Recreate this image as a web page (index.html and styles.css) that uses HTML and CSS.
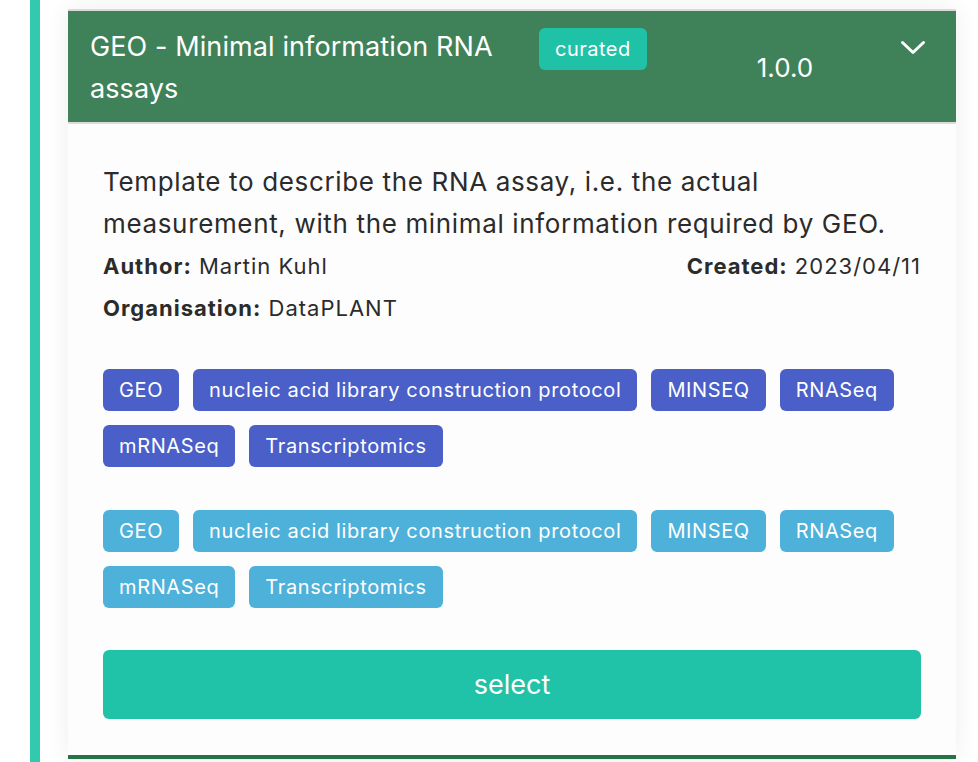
FILE: index.html
```html
<!DOCTYPE html>
<html lang="en">
<head>
<meta charset="utf-8">
<title>Template</title>
<link rel="stylesheet" href="styles.css">
</head>
<body>
<div class="rail">
  <div class="card">
    <div class="card-header">
      <div class="title">GEO - Minimal information RNA assays</div>
      <span class="badge">curated</span>
      <span class="version">1.0.0</span>
      <span class="chevron">
        <svg width="26" height="16" viewBox="0 0 26 16"><polyline points="2.5,2.5 13,12.5 23.5,2.5" fill="none" stroke="#fff" stroke-width="3" stroke-linecap="round" stroke-linejoin="round"/></svg>
      </span>
    </div>
    <div class="card-body">
      <p class="desc">Template to describe the RNA assay, i.e. the actual measurement, with the minimal information required by GEO.</p>
      <div class="meta-row">
        <span><b>Author:</b> Martin Kuhl</span>
        <span><b>Created:</b> 2023/04/11</span>
      </div>
      <div class="meta-row"><span><b>Organisation:</b> DataPLANT</span></div>
      <div class="tags tags-primary">
        <span class="tag">GEO</span>
        <span class="tag">nucleic acid library construction protocol</span>
        <span class="tag">MINSEQ</span>
        <span class="tag">RNASeq</span>
        <span class="tag">mRNASeq</span>
        <span class="tag">Transcriptomics</span>
      </div>
      <div class="tags tags-info">
        <span class="tag">GEO</span>
        <span class="tag">nucleic acid library construction protocol</span>
        <span class="tag">MINSEQ</span>
        <span class="tag">RNASeq</span>
        <span class="tag">mRNASeq</span>
        <span class="tag">Transcriptomics</span>
      </div>
      <button class="select-btn">select</button>
    </div>
  </div>
</div>
</body>
</html>
```
FILE: styles.css
```css
html, body {
  margin: 0;
  padding: 0;
  background: #ffffff;
  font-family: Inter, "Noto Sans", sans-serif;
  color: #2b2b2b;
}

.rail {
  margin-left: 30px;
  border-left: 10px solid #33c9ae;
  padding: 9px 0 0 28px;
  min-height: 762px;
  box-sizing: border-box;
}

.card {
  width: 888px;
  border-top: 2px solid #dadada;
  border-bottom: 4px solid #247447;
  background: #fdfdfd;
  box-shadow: 0 0 24px rgba(0, 0, 0, 0.07);
}

.card-header {
  display: flex;
  align-items: flex-start;
  background: #3f825a;
  color: #ffffff;
  padding: 15px 30px 12px 22px;
  border-bottom: 2px solid #dcdcdc;
}

.title {
  width: 428px;
  font-size: 27px;
  line-height: 42px;
  letter-spacing: 0.1px;
}

.badge {
  margin: 2px 0 0 21px;
  background: #1fc2a7;
  border-radius: 6px;
  font-size: 20px;
  letter-spacing: 0.5px;
  line-height: 42px;
  height: 42px;
  padding: 0 16px;
}

.version {
  align-self: center;
  margin-left: 110px;
  font-size: 26px;
  line-height: 42px;
}

.chevron {
  margin: 14px 0 0 auto;
  display: flex;
}

.card-body {
  padding: 37px 35px 36px 35px;
}

.desc {
  margin: 0;
  max-width: 800px;
  font-size: 26px;
  letter-spacing: 0.65px;
  line-height: 42px;
}

.meta-row {
  display: flex;
  justify-content: space-between;
  font-size: 22px;
  letter-spacing: 1px;
  line-height: 42px;
}

.meta-row b {
  font-weight: 700;
}

.tags {
  display: flex;
  flex-wrap: wrap;
  gap: 14px;
  margin-top: 40px;
}

.tags + .tags {
  margin-top: 43px;
}

.tag {
  height: 42px;
  line-height: 42px;
  padding: 0 16px;
  border-radius: 6px;
  font-size: 20px;
  letter-spacing: 0.62px;
  color: #ffffff;
}

.tags-primary .tag {
  background: #4a5fc7;
}

.tags-info .tag {
  background: #4eb1da;
}

.select-btn {
  display: block;
  width: 100%;
  height: 69px;
  margin-top: 42px;
  border: none;
  border-radius: 6px;
  background: #20c3a8;
  color: #ffffff;
  font-family: Inter, "Noto Sans", sans-serif;
  font-size: 27px;
}
```
